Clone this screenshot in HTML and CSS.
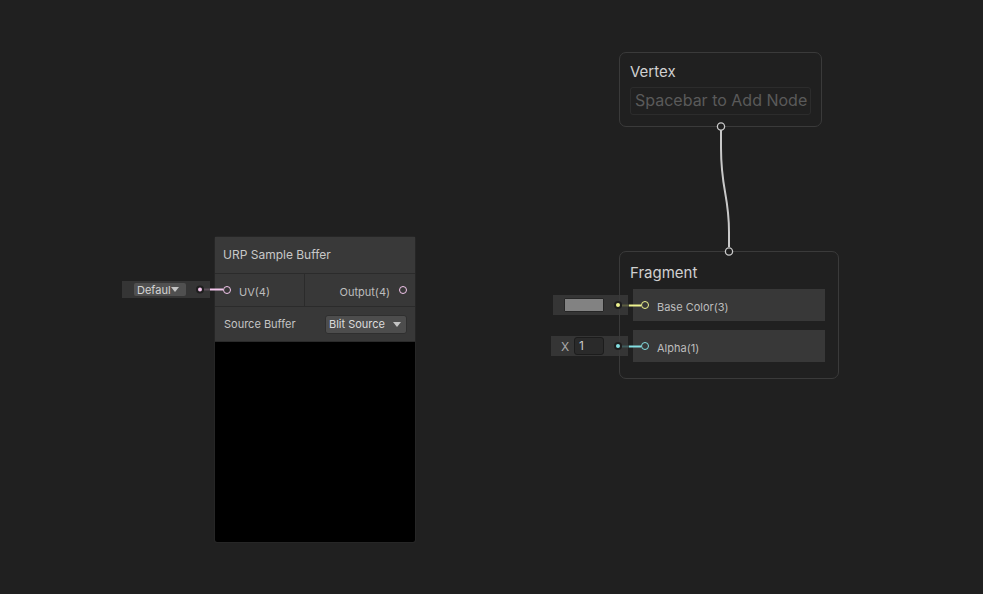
FILE: index.html
```html
<!DOCTYPE html>
<html lang="en">
<head>
    <meta charset="UTF-8">
    <title>Shader Graph</title>
    <link rel="stylesheet" href="styles.css">
</head>
<body>
    <div class="graph">
        <!-- inline input widgets, drawn under the nodes -->
        <div class="inline-field uv-field">
            <div class="mini-dropdown">Defaul<span class="caret"></span></div>
        </div>
        <div class="inline-field color-field">
            <div class="swatch"></div>
        </div>
        <div class="inline-field float-field">
            <span class="axis">X</span>
            <div class="num-box">1</div>
        </div>

        <div class="node sample-buffer">
            <div class="node-title">URP Sample Buffer</div>
            <div class="node-ports">
                <div class="port-in"><span class="port pink"></span><span class="label">UV(4)</span></div>
                <div class="port-out"><span class="label">Output(4)</span><span class="port pink"></span></div>
            </div>
            <div class="node-controls">
                <span>Source Buffer</span>
                <div class="dropdown">Blit Source<span class="caret"></span></div>
            </div>
            <div class="preview"></div>
        </div>

        <div class="context vertex">
            <div class="context-title">Vertex</div>
            <div class="add-node">Spacebar to Add Node</div>
        </div>

        <div class="context fragment">
            <div class="context-title">Fragment</div>
            <div class="block"><span class="port yellow"></span><span class="label">Base Color(3)</span></div>
            <div class="block"><span class="port cyan"></span><span class="label">Alpha(1)</span></div>
        </div>

        <svg class="edges" width="983" height="594">
            <!-- vertex -> fragment edge -->
            <path d="M721 130 L721 148 C721 190 729 195 729 232 L729 247" fill="none" stroke="#c9c9c9" stroke-width="2"/>
            <circle cx="721" cy="126.5" r="3.6" fill="#1f1f1f" stroke="#c9c9c9" stroke-width="1.3"/>
            <circle cx="729" cy="251.5" r="3.6" fill="#1f1f1f" stroke="#c9c9c9" stroke-width="1.3"/>

            <!-- UV connector -->
            <line x1="204" y1="289.5" x2="210" y2="289.5" stroke="#5c505a" stroke-width="2"/>
            <line x1="210" y1="289.5" x2="223" y2="289.5" stroke="#f3c6ec" stroke-width="2"/>
            <circle cx="200" cy="289.5" r="4" fill="#1e1e1e"/>
            <circle cx="200" cy="289.5" r="2" fill="#f3c6ec"/>

            <!-- base color connector -->
            <line x1="622" y1="305.5" x2="629" y2="305.5" stroke="#5a5c40" stroke-width="2"/>
            <line x1="629" y1="305.5" x2="641" y2="305.5" stroke="#eef38f" stroke-width="2"/>
            <circle cx="618" cy="305" r="4" fill="#1e1e1e"/>
            <circle cx="618" cy="305" r="2" fill="#eef38f"/>

            <!-- alpha connector -->
            <line x1="622" y1="346.5" x2="629" y2="346.5" stroke="#3f5a5b" stroke-width="2"/>
            <line x1="629" y1="346.5" x2="641" y2="346.5" stroke="#84dfe2" stroke-width="2"/>
            <circle cx="618" cy="346" r="4" fill="#1e1e1e"/>
            <circle cx="618" cy="346" r="2" fill="#84dfe2"/>
        </svg>
    </div>
</body>
</html>
```

FILE: styles.css
```css
body {
    margin: 0;
    background-color: #202020;
    font-family: Inter, "Noto Sans", sans-serif;
    color: #c4c4c4;
}
.graph {
    position: relative;
    width: 983px;
    height: 594px;
    overflow: hidden;
}
.edges {
    position: absolute;
    left: 0;
    top: 0;
    pointer-events: none;
}

/* ports */
.port {
    display: inline-block;
    box-sizing: border-box;
    width: 8px;
    height: 8px;
    border: 1.5px solid #c4c4c4;
    border-radius: 50%;
    background-color: #1f1f1f;
    flex: none;
}
.port.pink { border-color: #f3c6ec; background-color: #383838; }
.port.yellow { border-color: #eef38f; background-color: #383838; }
.port.cyan { border-color: #84dfe2; background-color: #383838; }
.label {
    position: relative;
    top: 2px;
}

/* regular node */
.node {
    position: absolute;
    left: 215px;
    top: 237px;
    width: 200px;
    background-color: #383838;
    border-radius: 2px;
    box-shadow: 0 0 0 1px #262626;
}
.node-title {
    height: 36px;
    line-height: 36px;
    padding-left: 8px;
    font-size: 12px;
    color: #c8c8c8;
    background-color: #393939;
    border-bottom: 1px solid #2b2b2b;
}
.node-ports {
    display: flex;
    height: 32px;
    font-size: 11px;
    color: #bdbdbd;
    border-bottom: 1px solid #2b2b2b;
}
.port-in {
    width: 81px;
    display: flex;
    align-items: center;
    gap: 8px;
    padding-left: 8px;
    border-right: 1px solid #2b2b2b;
}
.port-out {
    flex: 1;
    display: flex;
    align-items: center;
    justify-content: flex-end;
    gap: 9px;
    padding-right: 8px;
}
.node-controls {
    display: flex;
    align-items: center;
    justify-content: space-between;
    height: 34px;
    padding: 0 8px 0 9px;
    font-size: 11px;
    color: #c4c4c4;
    border-bottom: 1px solid #2b2b2b;
}
.dropdown {
    display: flex;
    align-items: center;
    gap: 8px;
    height: 17px;
    padding: 0 5px 0 3px;
    background-color: #4d4d4d;
    border: 1px solid #2f2f2f;
    border-radius: 3px;
    color: #dcdcdc;
    font-size: 11px;
}
.caret {
    width: 0;
    height: 0;
    border-left: 4px solid transparent;
    border-right: 4px solid transparent;
    border-top: 5px solid #c4c4c4;
}
.preview {
    height: 200px;
    background-color: #000;
    border-radius: 0 0 2px 2px;
}

/* inline input fields */
.inline-field {
    position: absolute;
    display: flex;
    align-items: center;
    box-sizing: border-box;
    background-color: #353535;
    font-size: 11px;
}
.uv-field {
    left: 122px;
    top: 281px;
    width: 88px;
    height: 17px;
    padding-left: 12px;
}
.mini-dropdown {
    display: flex;
    align-items: center;
    width: 52px;
    height: 13px;
    box-sizing: border-box;
    padding-left: 3px;
    background-color: #505050;
    border-radius: 2px;
    color: #d4d4d4;
    font-size: 11px;
    overflow: hidden;
    white-space: nowrap;
}
.color-field {
    left: 553px;
    top: 295px;
    width: 75px;
    height: 20px;
    padding-left: 11px;
}
.swatch {
    width: 40px;
    height: 14px;
    box-sizing: border-box;
    background-color: #828282;
    border: 1px solid #262626;
    border-radius: 1px;
}
.float-field {
    left: 551px;
    top: 336px;
    width: 77px;
    height: 20px;
    padding-left: 9px;
    gap: 4px;
}
.axis {
    width: 10px;
    text-align: center;
    color: #a8a8a8;
    font-size: 12px;
}
.num-box {
    width: 30px;
    height: 18px;
    box-sizing: border-box;
    padding-left: 4px;
    line-height: 16px;
    background-color: #2a2a2a;
    border: 1px solid #1c1c1c;
    border-radius: 3px;
    color: #c8c8c8;
    font-size: 12px;
}

/* master stack contexts */
.context {
    position: absolute;
    left: 619px;
    box-sizing: border-box;
    border: 1px solid #3a3a3a;
    border-radius: 7px;
    background-color: transparent;
    padding: 0 10px 0 10px;
}
.context-title {
    font-size: 15px;
    color: #d0d0d0;
    height: 34px;
    line-height: 38px;
}
.vertex {
    top: 52px;
    width: 203px;
    height: 75px;
}
.add-node {
    height: 28px;
    box-sizing: border-box;
    border: 1px solid #2c2c2c;
    border-radius: 3px;
    padding-left: 4px;
    line-height: 25px;
    font-size: 16px;
    color: #5a5a5a;
    white-space: nowrap;
}
.fragment {
    top: 251px;
    width: 220px;
    height: 128px;
    padding: 0 13px 0 13px;
    display: flex;
    flex-direction: column;
    gap: 9px;
}
.fragment .context-title {
    margin-left: -3px;
    height: 37px;
    line-height: 41px;
    margin-bottom: -9px;
}
.block {
    display: flex;
    align-items: center;
    gap: 8px;
    height: 32px;
    padding-left: 8px;
    background-color: #383838;
    font-size: 11px;
    color: #bdbdbd;
}
```
